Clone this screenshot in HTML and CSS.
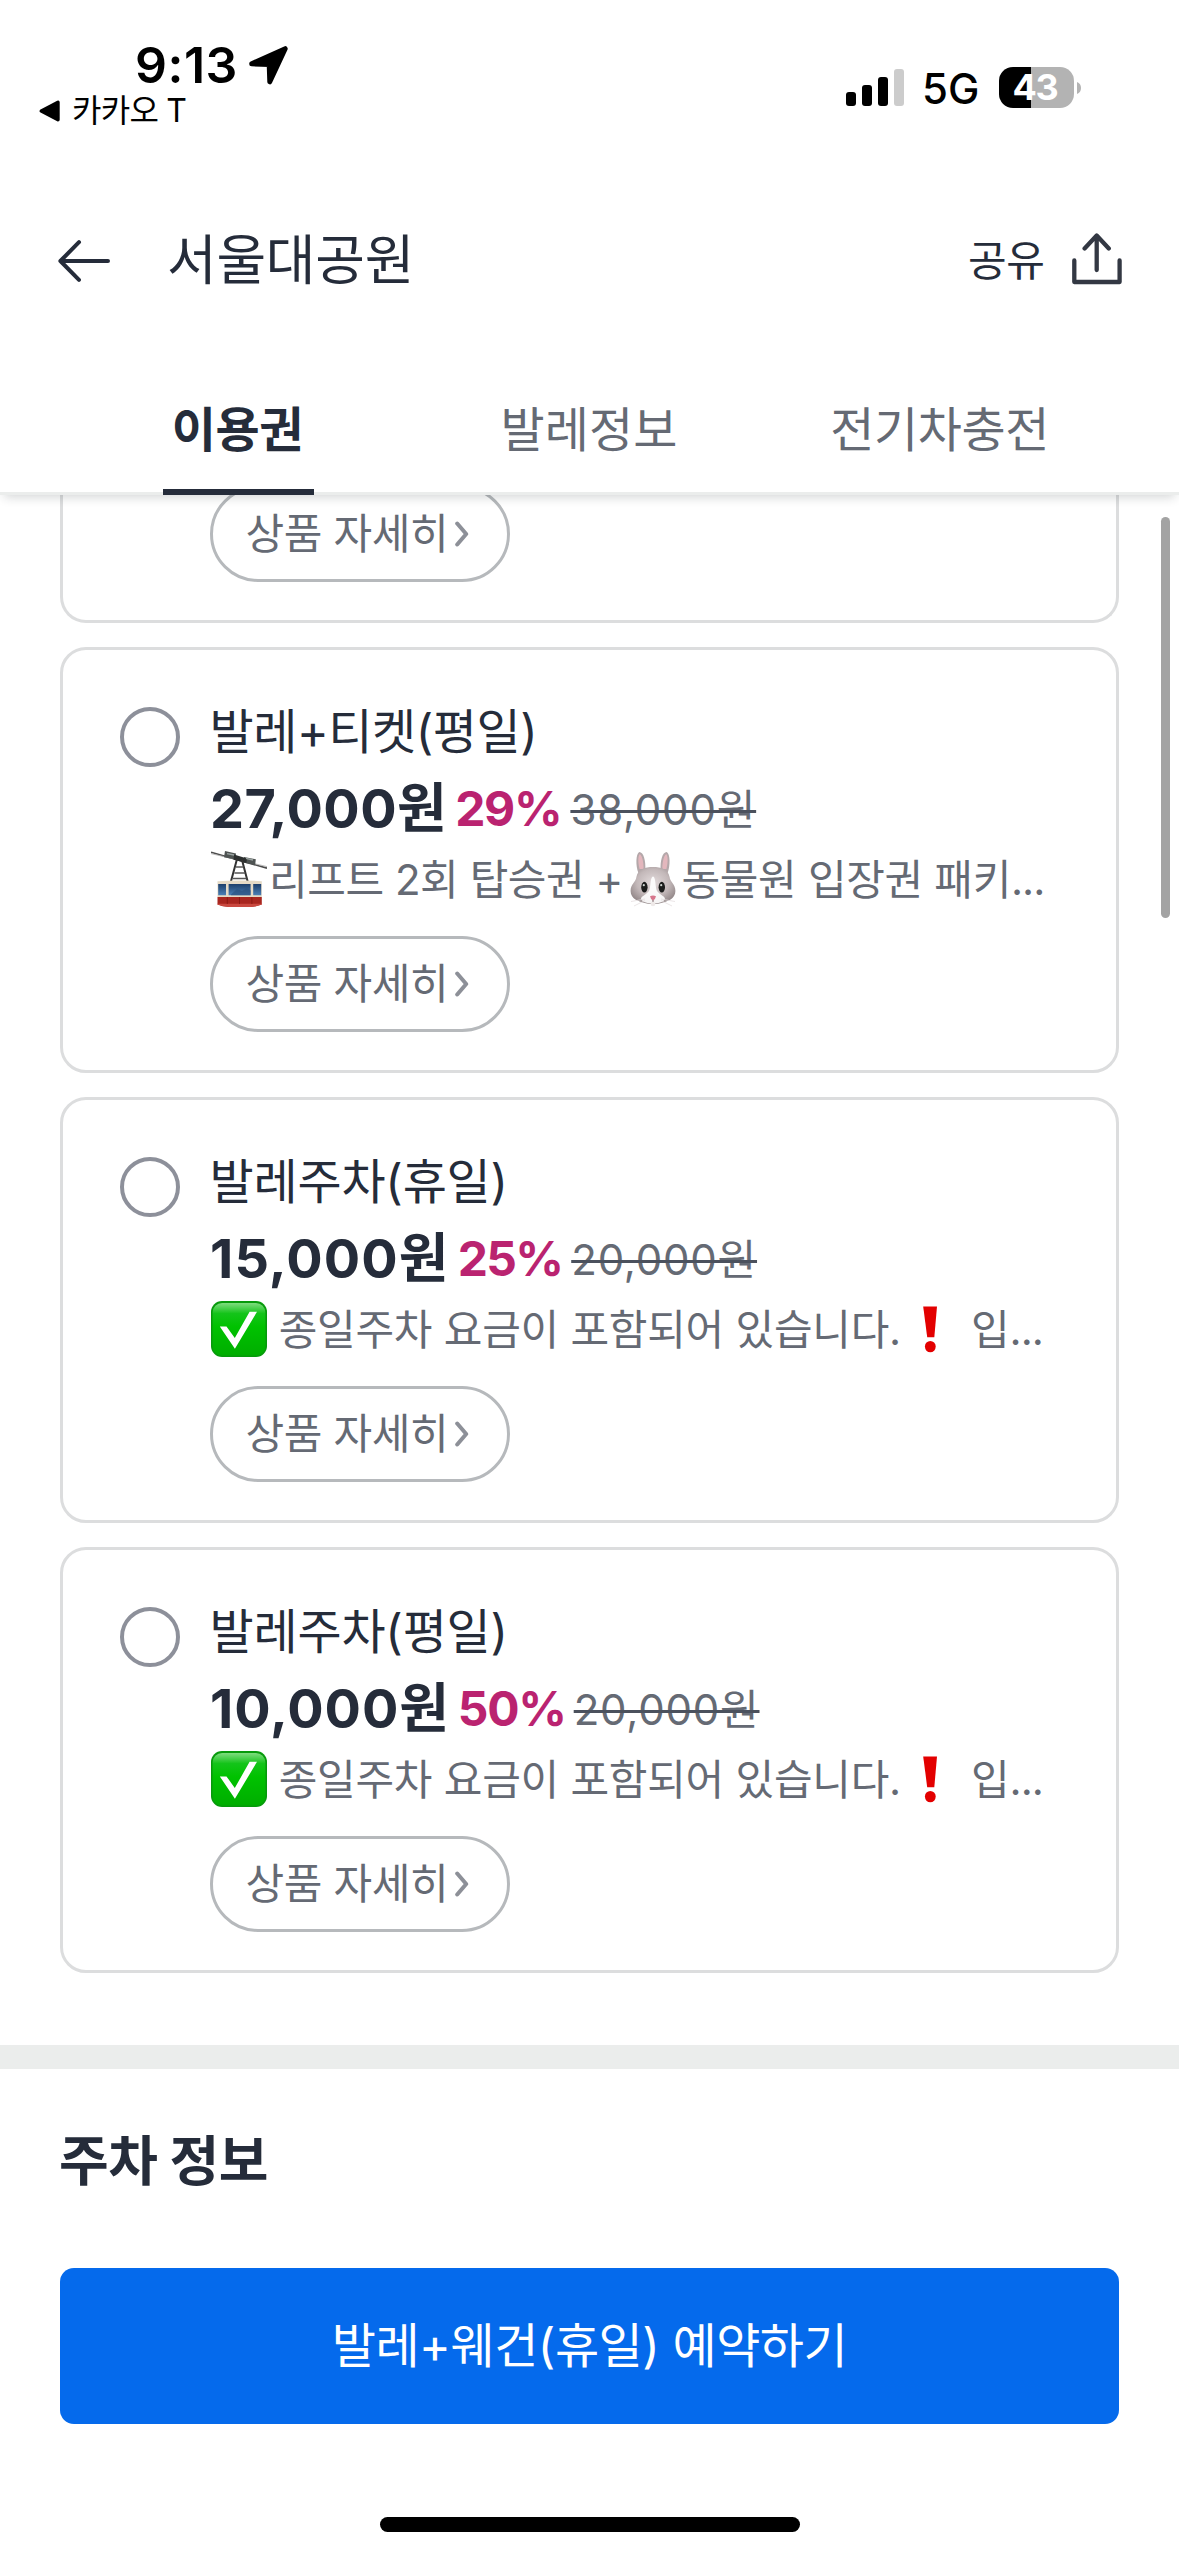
FILE: index.html
```html
<!DOCTYPE html>
<html lang="ko">
<head>
<meta charset="utf-8">
<title>서울대공원</title>
<link rel="stylesheet" href="styles.css">
</head>
<body>
<svg class="sprite" aria-hidden="true">
  <defs>
    <linearGradient id="g-check" x1="0" y1="0" x2="0" y2="1">
      <stop offset="0" stop-color="#7fdc7f"/><stop offset=".2" stop-color="#14c41a"/><stop offset=".45" stop-color="#00c200"/><stop offset="1" stop-color="#00ad00"/>
    </linearGradient>
    <linearGradient id="g-glass" x1="0" y1="0" x2="0" y2="1">
      <stop offset="0" stop-color="#1d3f6b"/><stop offset="1" stop-color="#4a7fb5"/>
    </linearGradient>
    <radialGradient id="g-fur" cx=".5" cy=".42" r=".6">
      <stop offset="0" stop-color="#e2dadb"/><stop offset=".6" stop-color="#c3b8b9"/><stop offset="1" stop-color="#938889"/>
    </radialGradient>
  </defs>
  <symbol id="chevron" viewBox="0 0 14 26">
    <path d="M2.2 2.5L11.2 13L2.2 23.5" fill="none" stroke="#8d9098" stroke-width="4" stroke-linecap="round" stroke-linejoin="round"/>
  </symbol>
  <symbol id="check" viewBox="0 0 56 56">
    <rect x="0" y="0" width="56" height="56" rx="11" fill="#069a0b"/>
    <rect x="1.6" y="2" width="52.8" height="52.6" rx="9.5" fill="url(#g-check)"/>
    <path d="M8.8 25.4H15.5L23.8 37L38.6 10.8H46L23.9 47.8Z" fill="#fff"/>
  </symbol>
  <symbol id="bang" viewBox="0 0 56 56">
    <path d="M21.2 5.4H35L32.3 36.2H25.2Z" fill="#e30000"/>
    <ellipse cx="28.3" cy="45.6" rx="5.4" ry="5.7" fill="#e30000"/>
  </symbol>
  <symbol id="gondola" viewBox="0 0 56 56">
    <path d="M0 1.2L56 17.2" stroke="#4b4b4b" stroke-width="1.6"/>
    <path d="M0 2.6L56 15.6" stroke="#a9a9a9" stroke-width=".8"/>
    <path d="M14 0L25 2.6L24.4 8.4L13 6.2Z" fill="#4f5453"/>
    <path d="M33 6L44.8 8.2L44.2 14L32 11.6Z" fill="#4f5453"/>
    <path d="M23 3.6L36 7.4L35.4 12L22.6 8.8Z" fill="#2c2f2f"/>
    <path d="M16 2.6L23 4M35 7.4L42 9" stroke="#9aa3a1" stroke-width="1.4"/>
    <path d="M26 8L19.8 31M31 9L36.8 31" stroke="#333" stroke-width="2" fill="none"/>
    <path d="M25 16H32.6M23.4 22H34M22 27.5H35.4" stroke="#555" stroke-width="1.3"/>
    <path d="M6.5 30.2Q28 28.6 50.8 30.2V46H6.5Z" fill="#e5dac6"/>
    <path d="M7.2 33H15V44.2H7.2ZM17.6 33H39.6V44.2H17.6ZM42.2 33H50.2V44.2H42.2Z" fill="url(#g-glass)"/>
    <path d="M20 43.5L26 38L31 40L36 37L39.6 39.5V44.2H20Z" fill="#2b5280" opacity=".7"/>
    <path d="M6.5 46H50.8V53.4Q44 56 39 56H18Q11 55.6 6.5 53.4Z" fill="#a8261f"/>
    <path d="M6.5 52.8H50.8V53.6Q44 56 39 56H18Q11 55.6 6.5 53.6Z" fill="#c9483f"/>
    <path d="M16.3 46V53M28.5 46V53M40.9 46V53" stroke="#84170f" stroke-width=".8"/>
  </symbol>
  <symbol id="rabbit" viewBox="0 0 56 56">
    <path d="M13.4 22C10.5 14 10.8 3 14.2 .9C18.6 .8 21 10 20.3 19ZM42.6 22C45.5 14 45.2 3 41.8 .9C37.4 .8 35 10 35.7 19Z" fill="#b4a8aa"/>
    <path d="M14.6 18C12.8 11 13 5 14.8 3C17.4 5 18.8 12 18.6 18ZM41.4 18C43.2 11 43 5 41.2 3C38.6 5 37.2 12 37.4 18Z" fill="#e3b7bd"/>
    <path d="M28 16C36 16 43 18 44.6 26C45 31 50.4 33 50.4 40C50.4 48 42 50.5 37 51.8C33 53.4 23 53.4 19 51.8C14 50.5 5.6 48 5.6 40C5.6 33 11 31 11.4 26C13 18 20 16 28 16Z" fill="url(#g-fur)"/>
    <path d="M28 25.5C31 26 30 36 32 40C35 44 40 45 40 48C38 51.5 33 52.6 28 52.6C23 52.6 18 51.5 16 48C16 45 21 44 24 40C26 36 25 26 28 25.5Z" fill="#fff" opacity=".9"/>
    <ellipse cx="19.4" cy="36.2" rx="3.2" ry="5.4" fill="#1c1d1c"/><ellipse cx="36.8" cy="36.2" rx="3.2" ry="5.4" fill="#1c1d1c"/>
    <circle cx="18.8" cy="34.2" r="1.1" fill="#cfd6d2"/><circle cx="36.2" cy="34.2" r="1.1" fill="#cfd6d2"/>
    <path d="M25 45.2Q28 44 31 45.2Q30.4 48.6 28 49.4Q25.6 48.6 25 45.2Z" fill="#d7768c"/>
    <path d="M28 49V51.4" stroke="#6d5055" stroke-width=".9"/>
    <circle cx="28" cy="53" r="2.3" fill="#eee9e8"/>
    <path d="M20 48L6 50.5M20 49.5L9 55M36 48L50 50.5M36 49.5L47 55" stroke="#e4dedf" stroke-width=".8"/>
  </symbol>
</svg>

<div class="screen">
  <header class="top">
    <div class="status">
      <div class="status-left">
        <div class="clock"><span class="time">9:13</span>
          <svg class="locate" viewBox="0 0 39 39"><path d="M2.7 17.8L36.2 2.7L20.8 35.8L20.2 18.5Z" stroke="#000" stroke-width="5" stroke-linejoin="round"/></svg>
        </div>
        <div class="return">
          <svg class="return-icon" viewBox="0 0 21 22"><path d="M2.3 11L19 2.2V19.8Z" stroke="#000" stroke-width="3.4" stroke-linejoin="round"/></svg>
          <span>카카오 T</span>
        </div>
      </div>
      <div class="status-right">
        <svg class="signal" viewBox="0 0 58 37">
          <rect x="0" y="23" width="10" height="14" rx="3"/><rect x="16" y="16" width="10" height="21" rx="3"/><rect x="32" y="8" width="10" height="29" rx="3"/><rect x="48" y="0" width="10" height="37" rx="3" fill="#ccc"/>
        </svg>
        <span class="network">5G</span>
        <span class="battery">43</span>
        <svg class="nub" viewBox="0 0 4 12"><path d="M0 0Q4 1.6 4 6T0 12Z" fill="#b3b3b3"/></svg>
      </div>
    </div>
    <div class="appbar">
      <svg class="back" viewBox="0 0 54 44"><path d="M22 3.2L3.4 22L22 40.8M3.4 22H51" fill="none" stroke="#252c3a" stroke-width="4" stroke-linecap="round" stroke-linejoin="round"/></svg>
      <h1>서울대공원</h1>
      <span class="share">공유</span>
      <svg class="share-icon" viewBox="0 0 50 52"><path d="M24.7 37V3.2M12.6 15.4L24.7 2.6L36.8 15.4M2.3 27.5V49H47.6V27.5" fill="none" stroke="#333843" stroke-width="4.3" stroke-linecap="round" stroke-linejoin="round"/></svg>
    </div>
    <nav class="tabs">
      <span class="tab tab-on">이용권</span>
      <span class="tab tab-info">발레정보</span>
      <span class="tab">전기차충전</span>
    </nav>
  </header>

  <main class="content">
    <div class="scrollbar"></div>
    <div class="cards">
      <article class="card card-cut">
        <div class="body"><a class="more">상품 자세히<svg class="chev"><use href="#chevron"/></svg></a></div>
      </article>
      <article class="card">
        <span class="radio"></span>
        <div class="body">
          <h2>발레+티켓(평일)</h2>
          <div class="prices price-a"><strong>27,000원</strong><em>29%</em><s>38,000원</s></div>
          <p class="desc"><svg class="emo"><use href="#gondola"/></svg><span class="lift">리프트 2회 탑승권 +</span><svg class="emo"><use href="#rabbit"/></svg><span class="zoo">동물원 입장권 패키<span class="dots">...</span></span></p>
          <a class="more">상품 자세히<svg class="chev"><use href="#chevron"/></svg></a>
        </div>
      </article>
      <article class="card">
        <span class="radio"></span>
        <div class="body">
          <h2 class="plain">발레주차(휴일)</h2>
          <div class="prices price-b"><strong>15,000원</strong><em>25%</em><s>20,000원</s></div>
          <p class="desc"><svg class="emo"><use href="#check"/></svg><span class="note">종일주차 요금이 포함되어 있습니다.</span><svg class="emo"><use href="#bang"/></svg><span class="rest">입<span class="dots">...</span></span></p>
          <a class="more">상품 자세히<svg class="chev"><use href="#chevron"/></svg></a>
        </div>
      </article>
      <article class="card">
        <span class="radio"></span>
        <div class="body">
          <h2 class="plain">발레주차(평일)</h2>
          <div class="prices price-c"><strong>10,000원</strong><em>50%</em><s>20,000원</s></div>
          <p class="desc"><svg class="emo"><use href="#check"/></svg><span class="note">종일주차 요금이 포함되어 있습니다.</span><svg class="emo"><use href="#bang"/></svg><span class="rest">입<span class="dots">...</span></span></p>
          <a class="more">상품 자세히<svg class="chev"><use href="#chevron"/></svg></a>
        </div>
      </article>
    </div>
    <section class="parking"><h2>주차 정보</h2></section>
  </main>

  <footer class="bottom">
    <button class="cta">발레+웨건(휴일) 예약하기</button>
    <div class="home"></div>
  </footer>
</div>
</body>
</html>
```
FILE: styles.css
```css
* { box-sizing: border-box; margin: 0; padding: 0; }
body {
  background: #fff;
  color: #252c3a;
  font-family: Inter, "Noto Sans CJK KR", sans-serif;
  font-weight: 400;
}
.sprite { position: absolute; width: 0; height: 0; }
.screen { display: flex; flex-direction: column; width: 1179px; height: 2556px; overflow: hidden; }
svg { display: block; flex: none; }

/* header */
.top {
  position: relative;
  z-index: 1;
  flex: none;
  height: 495px;
  background: #fff;
  box-shadow: 0 6px 10px -4px rgba(30, 40, 45, .2);
}
.status { display: flex; justify-content: space-between; height: 125px; color: #000; }
.status-left { padding-top: 33px; }
.clock { display: flex; align-items: center; height: 64px; padding-left: 135px; }
.time { width: 114px; font-size: 50px; font-weight: 600; line-height: 64px; letter-spacing: .48px; }
.locate { width: 39px; height: 39px; }
.return { display: flex; align-items: center; height: 27px; padding-left: 38.5px; font-size: 32px; line-height: 27px; letter-spacing: -.75px; }
.return-icon { width: 21px; height: 22px; margin-right: 12.5px; }
.status-right { display: flex; align-items: center; height: 40px; margin: 67.5px 98px 0 0; }
.signal { width: 58px; height: 37px; }
.network { width: 77px; margin-left: 18px; padding-top: 3px; font-size: 42px; font-weight: 500; line-height: 42px; }
.battery {
  width: 75px;
  height: 41px;
  padding-left: 13.5px;
  border-radius: 14px;
  background: linear-gradient(90deg, #000 32px, #b3b3b3 32px);
  color: #fff;
  font-size: 36px;
  font-weight: 700;
  line-height: 41px;
  letter-spacing: -1.3px;
}
.nub { width: 4px; height: 12px; margin-left: 3px; }
.appbar { display: flex; align-items: center; height: 272px; padding-left: 57px; }
.back { width: 54px; height: 44px; }
h1 { margin-left: 56px; font-size: 54px; font-weight: 400; line-height: 70px; letter-spacing: -.25px; }
.share { margin-left: auto; width: 104px; font-size: 42px; line-height: 60px; letter-spacing: -.44px; }
.share-icon { width: 50px; height: 52px; margin: 0 57px 4px 0; }
.tabs {
  display: grid;
  grid-template-columns: repeat(3, 1fr);
  justify-items: center;
  height: 98px;
  padding: 0 64px 0 63px;
  box-shadow: inset 0 -3px #ebedec;
}
.tab { height: 98px; padding: 0 10px; color: #656a74; font-size: 48px; line-height: 65px; letter-spacing: -.41px; }
.tab-on { padding: 0 11px 0 9px; border-bottom: 6px solid #252c3a; color: #252c3a; font-weight: 700; }
.tab-info { letter-spacing: .1px; }

/* ticket list */
.content { position: relative; flex: 1; min-height: 0; overflow: hidden; }
.scrollbar { position: absolute; top: 22px; right: 9px; width: 9px; height: 401px; border-radius: 5px; background: #a3a3a3; }
.cards { display: flex; flex-direction: column; gap: 24px; padding: 0 60px 72px; margin-top: -20px; }
.card {
  display: flex;
  gap: 30px;
  height: 426px;
  padding: 51px 57px 0;
  border: 3px solid #dcddde;
  border-radius: 26px;
}
.card-cut { height: 148px; padding: 0 57px 0 147px; border-top: 0; border-radius: 0 0 26px 26px; }
.card-cut .more { margin-top: 11px; }
.radio { flex: none; width: 60px; height: 60px; margin-top: 6px; border: 4px solid #8d909a; border-radius: 50%; }
.body { min-width: 0; }
.card h2 { font-size: 48px; font-weight: 400; line-height: 61px; letter-spacing: -.45px; text-indent: -.5px; white-space: nowrap; }
.card .plain { letter-spacing: -.2px; }
.prices { display: flex; align-items: center; height: 78px; margin-top: 8px; line-height: 78px; white-space: nowrap; }
.prices strong { font-size: 54px; font-weight: 700; letter-spacing: .9px; margin-right: 8px; }
.prices em { color: #ba2370; font-size: 48px; font-style: normal; font-weight: 700; letter-spacing: -1.3px; margin-right: 9px; }
.prices s { padding-top: 2px; color: #656a74; font-size: 42px; letter-spacing: .8px; text-decoration: line-through 3px #4b515d; }
.price-a strong { letter-spacing: .44px; }
.price-b strong { letter-spacing: 1.1px; }
.price-b em { letter-spacing: -1.7px; }
.price-c em { margin-right: 8px; }
.desc { display: flex; align-items: center; height: 63px; margin-left: 1px; color: #656a74; font-size: 42px; line-height: 63px; white-space: nowrap; }
.emo { width: 56px; height: 56px; margin-bottom: 2px; }
.lift { margin-left: 2px; width: 355.5px; letter-spacing: -.45px; }
.zoo { margin-left: 1px; letter-spacing: -.33px; }
.note { margin-left: 11.7px; width: 623.7px; letter-spacing: -.26px; }
.rest { margin-left: 12.6px; }
.dots { letter-spacing: -1px; }
.more {
  display: flex;
  align-items: center;
  width: 300px;
  height: 96px;
  margin-top: 25px;
  padding-left: 32.5px;
  border: 3px solid #b6b9bc;
  border-radius: 48px;
  color: #656a74;
  font-size: 42px;
  line-height: 90px;
  letter-spacing: -.37px;
}
.chev { width: 14px; height: 26px; margin-left: 7px; }

/* parking section */
.parking { border-top: 24px solid #ebedec; padding: 58px 59px 0; }
.parking h2 { font-size: 54px; font-weight: 700; line-height: 70px; letter-spacing: -.53px; }

/* bottom action */
.bottom { flex: none; height: 288px; padding: 0 60px; background: #fff; }
.cta {
  display: block;
  width: 1059px;
  height: 156px;
  border: 0;
  border-radius: 14px;
  background: #056aec;
  color: #fff;
  font: inherit;
  font-size: 48px;
  line-height: 156px;
  letter-spacing: -.45px;
}
.home { width: 420px; height: 15px; margin: 93px auto 0; border-radius: 8px; background: #000; }
```
